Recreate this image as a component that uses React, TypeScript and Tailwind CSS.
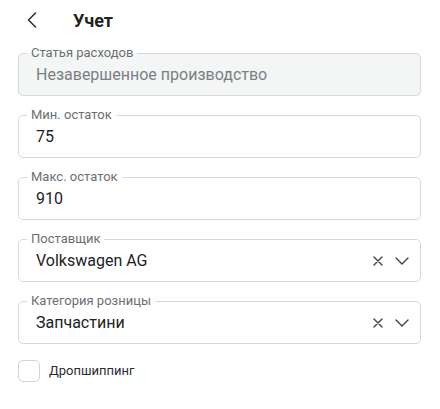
import { ReactNode } from 'react'

/**
 * Accounting form: outlined fields with floating legends.
 */
interface FieldProps {
  label: string
  value: string
  disabled?: boolean
  select?: boolean
}

function Field({ label, value, disabled = false, select = false }: FieldProps) {
  return (
    <fieldset
      className={
        'm-0 min-w-0 rounded-[5px] border border-[#d5d9dc] p-0 ' +
        (disabled ? 'bg-[#f4f6f6]' : 'bg-white')
      }
    >
      <legend className="ml-[8px] px-[4px] text-[13px] leading-[14px] text-[#6b6f73]">
        {label}
      </legend>
      <div className="flex h-[35px] items-start pb-[8px] pl-[17px] pr-[11px] pt-[3px]">
        <span
          className={
            'flex-1 truncate text-[16px] leading-[24px] ' +
            (disabled ? 'text-[#7b7f83]' : 'text-[#202326]')
          }
        >
          {value}
        </span>
        {select && (
          <div className="flex h-[24px] items-center gap-[12px] text-[#3d4247]">
            <svg width="10" height="10" viewBox="0 0 10 10" fill="none">
              <path d="M1 1l8 8M9 1l-8 8" stroke="currentColor" strokeWidth="1.4" strokeLinecap="round" />
            </svg>
            <svg width="14" height="8" viewBox="0 0 14 8" fill="none">
              <path d="M1 1l6 6 6-6" stroke="currentColor" strokeWidth="1.4" strokeLinecap="round" strokeLinejoin="round" />
            </svg>
          </div>
        )}
      </div>
    </fieldset>
  )
}

function Checkbox({ children }: { children: ReactNode }) {
  return (
    <label className="flex items-center gap-[9px]">
      <span className="h-[22px] w-[22px] rounded-[5px] border border-[#cfd4d8] bg-white" />
      <span className="text-[13px] text-[#2a2d30]">{children}</span>
    </label>
  )
}

export default function App() {
  return (
    <div
      className="min-h-screen bg-white pl-[18px] pr-[19px]"
      style={{ fontFamily: 'Roboto, "Noto Sans", sans-serif' }}
    >
      <div className="flex h-[40px] items-center">
        <svg className="ml-[9px]" width="10" height="16" viewBox="0 0 10 16" fill="none">
          <path d="M8.5 1L1.5 8l7 7" stroke="#2f3337" strokeWidth="1.6" strokeLinecap="round" strokeLinejoin="round" />
        </svg>
        <h1 className="ml-[36px] text-[18px] font-bold text-[#1f2226]">Учет</h1>
      </div>

      <div className="flex flex-col gap-[12px] pt-[6px]">
        <Field label="Статья расходов" value="Незавершенное производство" disabled />
        <Field label="Мин. остаток" value="75" />
        <Field label="Макс. остаток" value="910" />
        <Field label="Поставщик" value="Volkswagen AG" select />
        <Field label="Категория розницы" value="Запчастини" select />
      </div>

      <div className="pt-[16px]">
        <Checkbox>Дропшиппинг</Checkbox>
      </div>
    </div>
  )
}
